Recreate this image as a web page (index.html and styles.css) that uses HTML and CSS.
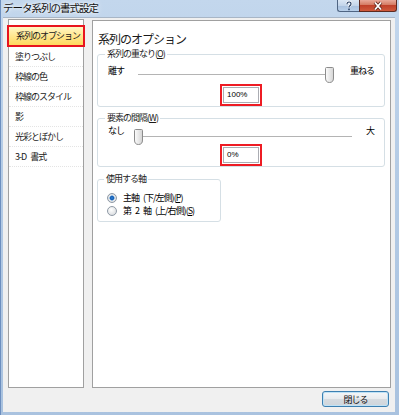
FILE: index.html
```html
<!DOCTYPE html>
<html lang="ja">
<head>
    <meta charset="UTF-8">
    <meta name="viewport" content="width=device-width, initial-scale=1.0">
    <title>データ系列の書式設定</title>
    <link rel="stylesheet" href="styles.css">
</head>
<body>
    <div class="window">
        <div class="titlebar">
            <span class="title">データ系列の書式設定</span>
            <div class="caption-buttons">
                <span class="cap-btn cap-help">
                    <svg width="10" height="10" viewBox="0 0 10 10">
                        <path d="M3 3.2 Q3 1 5 1 Q7 1 7 3 Q7 4.2 5.6 4.9 Q5 5.3 5 6.5" fill="none" stroke="#fff" stroke-width="2.6"/>
                        <path d="M3 3.2 Q3 1 5 1 Q7 1 7 3 Q7 4.2 5.6 4.9 Q5 5.3 5 6.5" fill="none" stroke="#2c4468" stroke-width="1.2"/>
                        <rect x="4.2" y="7.6" width="1.6" height="1.6" fill="#2c4468"/>
                    </svg>
                </span>
                <span class="cap-btn cap-close">
                    <svg width="12" height="10" viewBox="0 0 12 10">
                        <path d="M3 1.5 L9 8.5 M9 1.5 L3 8.5" stroke="#5a2218" stroke-width="3.4"/>
                        <path d="M3 1.5 L9 8.5 M9 1.5 L3 8.5" stroke="#fff" stroke-width="1.8"/>
                    </svg>
                </span>
            </div>
        </div>

        <div class="client">
            <div class="panes">
                <ul class="nav">
                    <li class="nav-item selected">系列のオプション</li>
                    <li class="nav-item">塗りつぶし</li>
                    <li class="nav-item">枠線の色</li>
                    <li class="nav-item">枠線のスタイル</li>
                    <li class="nav-item">影</li>
                    <li class="nav-item">光彩とぼかし</li>
                    <li class="nav-item">3-D 書式</li>
                </ul>

                <div class="content">
                    <h1 class="heading">系列のオプション</h1>

                    <fieldset class="group group-overlap">
                        <legend>系列の重なり(<u>O</u>)</legend>
                        <div class="slider-row">
                            <span class="end-label">離す</span>
                            <div class="slider at-end">
                                <svg class="thumb" width="9" height="16" viewBox="0 0 9 16">
                                    <defs>
                                        <linearGradient id="tg1" x1="0" y1="0" x2="1" y2="0">
                                            <stop offset="0" stop-color="#fdfdfd"/>
                                            <stop offset="1" stop-color="#d4d4d4"/>
                                        </linearGradient>
                                    </defs>
                                    <path d="M1.5 0.5 H7.5 Q8.5 0.5 8.5 1.5 V11 Q8.5 15.5 4.5 15.5 Q0.5 15.5 0.5 11 V1.5 Q0.5 0.5 1.5 0.5 Z" fill="url(#tg1)" stroke="#8c8c8c"/>
                                </svg>
                            </div>
                            <span class="end-label">重ねる</span>
                        </div>
                        <div class="value-row">
                            <span class="textbox">100%</span>
                        </div>
                    </fieldset>

                    <fieldset class="group group-gap">
                        <legend>要素の間隔(<u>W</u>)</legend>
                        <div class="slider-row">
                            <span class="end-label">なし</span>
                            <div class="slider">
                                <svg class="thumb" width="9" height="16" viewBox="0 0 9 16">
                                    <defs>
                                        <linearGradient id="tg2" x1="0" y1="0" x2="1" y2="0">
                                            <stop offset="0" stop-color="#fdfdfd"/>
                                            <stop offset="1" stop-color="#d4d4d4"/>
                                        </linearGradient>
                                    </defs>
                                    <path d="M1.5 0.5 H7.5 Q8.5 0.5 8.5 1.5 V11 Q8.5 15.5 4.5 15.5 Q0.5 15.5 0.5 11 V1.5 Q0.5 0.5 1.5 0.5 Z" fill="url(#tg2)" stroke="#8c8c8c"/>
                                </svg>
                            </div>
                            <span class="end-label">大</span>
                        </div>
                        <div class="value-row">
                            <span class="textbox">0%</span>
                        </div>
                    </fieldset>

                    <fieldset class="group group-axis">
                        <legend>使用する軸</legend>
                        <label class="radio-row">
                            <span class="radio checked"></span>
                            <span>主軸 (下/左側)(<u>P</u>)</span>
                        </label>
                        <label class="radio-row">
                            <span class="radio"></span>
                            <span>第 2 軸 (上/右側)(<u>S</u>)</span>
                        </label>
                    </fieldset>
                </div>
            </div>

            <div class="footer">
                <button class="close-button">閉じる</button>
            </div>
        </div>
    </div>
</body>
</html>
```

FILE: styles.css
```css
/* Reset */
* { margin: 0; padding: 0; box-sizing: border-box; }
body { width: 399px; height: 415px; overflow: hidden; font-family: "Noto Sans CJK JP", "Noto Sans", sans-serif; color: #000; }

/* Window frame */
.window { width: 399px; height: 415px; display: flex; flex-direction: column; padding: 0 4px 3px 2px; background: linear-gradient(to bottom, #c3d7ed 0%, #b4cbe5 40%, #a9c2df 100%); border-left: 1px solid #6d8fbf; }

/* Title bar */
.titlebar { height: 17px; display: flex; justify-content: space-between; align-items: flex-start; margin-right: -2px; }
.title { font-size: 10.5px; letter-spacing: -1px; line-height: 16px; color: #111; text-shadow: 0 0 6px #fff, 0 0 3px #fff; }
.caption-buttons { display: flex; }
.cap-btn { height: 12px; display: flex; align-items: center; justify-content: center; border: 1px solid #4f6583; border-top: none; }
.cap-help { width: 22px; background: linear-gradient(to bottom, #dbe7f4 0%, #c3d5ea 50%, #a8c0dd 51%, #b9d0ea 100%); border-radius: 0 0 0 3px; border-right: none; }
.cap-close { width: 38px; background: linear-gradient(to bottom, #e9a99a 0%, #d47a62 45%, #c0412a 50%, #cf5a3c 100%); border-color: #5c2a20; border-radius: 0 0 3px 0; }

/* Client area */
.client { flex: 1; display: flex; flex-direction: column; background-color: #f0f0f0; border-top: 1px solid #a8b6c6; }
.panes { display: flex; align-items: flex-start; gap: 8px; padding: 1px 4px 0 5px; }

/* Left navigation list */
.nav { list-style: none; width: 76px; height: 369px; background: #fff; border: 1px solid #a0a0a0; padding-top: 5px; }
.nav-item { height: 20px; font-size: 9px; letter-spacing: -1px; word-spacing: 3px; line-height: 19px; padding-left: 6px; border-bottom: 1px dotted #e4e4e4; color: #1a1a1a; }
.nav-item.selected { height: 22px; margin: 0 -2px; padding-left: 7px; line-height: 18px; border: 2px solid #e8141e; background: linear-gradient(to bottom, #fff6c4 0%, #ffe58a 55%, #ffd95e 100%); }

/* Right content pane */
.content { flex: 1; height: 368px; margin-top: 1px; background: #fff; border: 1px solid #a0a0a0; display: flex; flex-direction: column; align-items: flex-start; }
.heading { font-size: 12px; font-weight: normal; letter-spacing: -1px; line-height: 16px; margin: 10px 0 0 5px; color: #1a1a1a; }

/* Group boxes */
.group { border: 1px solid #d5dfe5; border-radius: 3px; margin: 1px 5px 0 4px; padding: 2px 10px 3px 10px; align-self: stretch; font-size: 9px; letter-spacing: -1px; }
.group legend { margin-left: -3px; padding: 0 2px; line-height: 12px; font-size: 9px; color: #1a1a1a; }
.group-gap { margin-top: 5px; padding-top: 0; }
.group-axis { margin-top: 6px; width: 124px; align-self: flex-start; padding: 6px 6px 4px 9px; }

.slider-row { display: flex; align-items: flex-start; gap: 14px; }
.end-label { line-height: 14px; white-space: nowrap; }
.slider { flex: 1; height: 16px; margin-top: 3px; display: flex; justify-content: flex-start; background: linear-gradient(#b4b4b4, #b4b4b4) no-repeat 0 7px / 100% 1px, linear-gradient(#fff, #fff) no-repeat 0 8px / 100% 1px; }
.slider.at-end { justify-content: flex-end; }
.group-overlap .slider-row { margin-top: 2px; gap: 16px; }
.group-overlap .slider { margin-left: -2px; }
.group-gap .slider { margin-top: 5px; margin-left: -4px; }
.thumb { display: block; }

.value-row { display: flex; justify-content: center; margin-top: 4px; }
.group-gap .value-row { margin-top: 2px; }
.textbox { width: 36px; height: 16px; border: 1px solid #abadb3; font-size: 8px; letter-spacing: 0; line-height: 14px; padding-left: 3px; outline: 2px solid #ee1c24; outline-offset: 1px; font-family: "Liberation Sans", Arial, sans-serif; }

/* Radio buttons */
.radio-row { display: flex; align-items: center; gap: 6px; height: 13px; white-space: nowrap; word-spacing: 3px; }
.radio { width: 10px; height: 10px; border-radius: 50%; border: 1px solid #8f9aa6; background: radial-gradient(circle at 40% 35%, #ffffff 0%, #e4e6e8 60%, #c9cdd2 100%); }
.radio.checked { background: radial-gradient(circle at 50% 50%, #2b84d8 0%, #1a5fb4 30%, #6aa5df 42%, #e6e8ea 50%, #d0d4d8 100%); }

/* Footer */
.footer { display: flex; justify-content: flex-end; padding: 3px 6px 0 0; }
.close-button { width: 67px; height: 16px; border: 1px solid #3c7fb1; border-radius: 3px; background: linear-gradient(to bottom, #f4f6f8 0%, #e8ebee 48%, #d6dbe0 52%, #cfd5db 100%); box-shadow: inset 0 0 0 1px #bfe2f6; font-family: "Noto Sans CJK JP", sans-serif; font-size: 9px; letter-spacing: -1px; line-height: 13px; color: #111; }
```
